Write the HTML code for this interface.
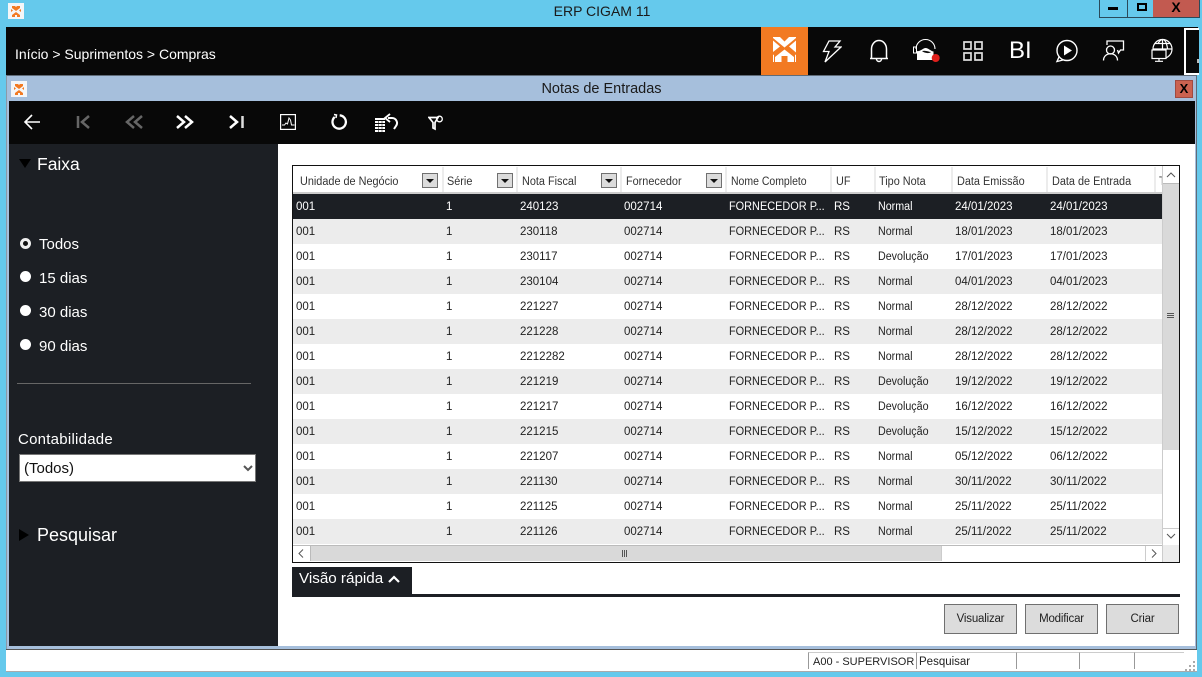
<!DOCTYPE html>
<html><head><meta charset="utf-8"><style>
*{box-sizing:border-box}
html,body{margin:0;padding:0;width:1202px;height:677px;overflow:hidden;background:#65c9ec;font-family:"Liberation Sans",sans-serif}
div,span,svg{position:absolute}
.t{white-space:nowrap;line-height:16px}
.h{top:174px;font-size:11.5px;color:#333;white-space:nowrap;line-height:16px;transform:scaleX(.945);transform-origin:left}
.dd{top:173px;width:16px;height:15px;background:#dcdcdc;border:1px solid #707070}
.dd:after{content:"";position:absolute;left:3px;top:5px;border:4px solid transparent;border-top:4px solid #111;border-bottom:0}
.sep{top:167px;width:2px;height:26px;background:#ececec}
.r{left:293px;width:869px;height:25px;font-size:11.5px;color:#222}
.r span{top:5px;white-space:nowrap;line-height:16px}
.a{left:3px}.b{left:153px}.c{left:227px}.d{left:331px}.e{left:436px;transform:scaleX(.95);transform-origin:left}.f{left:541px}.g{left:585px;transform:scaleX(.93);transform-origin:left}.i{left:662px}.j{left:757px}
.s{color:#fff;background:#1c1f24}.o{background:#ececec}.w{background:#fff}
.btn{top:604px;width:73px;height:30px;background:#dcdcdc;border:1px solid #707070;font-size:11.5px;letter-spacing:-.2px;color:#222;text-align:center;line-height:29px}
.rad{left:20px;width:11px;height:11px;border-radius:50%;background:#fff}
.lbl{left:39px;color:#fff;font-size:15px;line-height:18px;white-space:nowrap}
.sb{top:652px;height:17px;border-top:1px solid #ccc;border-left:1px solid #999}
</style></head><body>

<!-- title bar -->
<svg style="left:8px;top:3px" width="16" height="16" viewBox="0 0 16 16"><rect width="16" height="16" fill="#f4f6f8"/><path d="M4 3h3l1 1 1-1h3v2L8 8 4 5zM3 6l2 1.500-2 1.500zM13 6v3l-2-1.500zM8 9l4 3v2h-3v-2H7v2H4v-2z" fill="#f27a22"/></svg>
<div class="t" style="left:1px;top:3px;width:1202px;text-align:center;font-size:14px;color:#1a1a1a">ERP CIGAM 11</div>
<div style="left:1099px;top:0;width:29px;height:18px;border:1px solid #2a4a5a;border-top:0"><div style="left:8px;top:7px;width:10px;height:3px;background:#000"></div></div>
<div style="left:1127px;top:0;width:27px;height:18px;border:1px solid #2a4a5a;border-top:0"><div style="left:9px;top:3px;width:10px;height:8px;border:2px solid #000;border-top-width:2px"></div></div>
<div style="left:1153px;top:0;width:47px;height:18px;background:#c25a50;border:1px solid #2a4a5a;border-top:0;border-left:0;font-size:14px;font-weight:bold;text-align:center;line-height:15px;color:#000">X</div>

<!-- top black bar -->
<div style="left:6px;top:27px;width:1192px;height:48px;background:#080808"></div>
<div class="t" style="left:15px;top:46px;color:#fff;font-size:14px">Início &gt; Suprimentos &gt; Compras</div>
<div style="left:761px;top:27px;width:47px;height:48px;background:#f27a22"></div>
<svg style="left:773px;top:37px" width="23" height="26" viewBox="0 0 23 26" fill="#fff"><path d="M0 0h7l4.500 4.500L16 0h7v1L11.500 10.500 0 1z"/><path d="M0 3.500l7 6L0 15zM23 3.500l-7 6 7 6z"/><path d="M11.500 12.500L21 20v5h-6.500v-6h-6v6H2v-5z"/><path d="M0 18l1 -.5V25H0zM23 18l-1 -.5V25h1z"/></svg>
<svg style="left:822px;top:39px" width="20" height="25" viewBox="0 0 20 25" fill="none" stroke="#fff" stroke-width="1.300"><path d="M7 2h11l-5 6h6L3 23l4-10.500H1.500z"/></svg>
<svg style="left:869px;top:39px" width="20" height="24" viewBox="0 0 20 24" fill="none" stroke="#fff" stroke-width="1.500"><path d="M2.500 19V10a7.500 8.500 0 0 1 15 0v9M1 19.500h18" /><path d="M7.500 20a2.500 2.500 0 0 0 5 0"/></svg>
<svg style="left:912px;top:38px" width="30" height="26" viewBox="0 0 30 26"><path d="M4 11a9.500 9.500 0 0 1 19 0" fill="none" stroke="#fff" stroke-width="1.100"/><path d="M5 13c3 1 6-3 8.500-3 3 0 5 3 8 3.500V22H5z" fill="#fff"/><path d="M10 13c2 2 7 3 9 1-2 0-5-2-9-1z" fill="#111"/><rect x="1.500" y="9" width="3" height="6" fill="none" stroke="#fff" stroke-width="1"/><circle cx="23.700" cy="20" r="4" fill="#e0201c"/></svg>
<svg style="left:963px;top:41px" width="20" height="20" viewBox="0 0 20 20" fill="none" stroke="#ddd" stroke-width="1.700"><path d="M1 1h7v7H1zM12 1h7v7h-7zM1 12h7v7H1zM12 12h7v7h-7z"/></svg>
<div class="t" style="left:1009px;top:39px;font-size:24px;line-height:24px;color:#fff">BI</div>
<svg style="left:1055px;top:39px" width="24" height="24" viewBox="0 0 24 24" fill="none" stroke="#fff" stroke-width="1.400"><circle cx="12" cy="11.500" r="10"/><path d="M4 18l-2 4.500 6-1.500"/><path d="M9 6.500l8 5-8 5z" fill="#fff" stroke="none"/></svg>
<svg style="left:1102px;top:39px" width="24" height="23" viewBox="0 0 24 23" fill="none" stroke="#fff" stroke-width="1.300"><path d="M5 6V2h16.500v9h-3l-2 3-1-3"/><circle cx="8.500" cy="11" r="4"/><path d="M1.500 21.500c0-9 14-9 14 0"/></svg>
<svg style="left:1150px;top:38px" width="24" height="25" viewBox="0 0 24 25" fill="none" stroke="#fff" stroke-width="1.200"><circle cx="12.500" cy="11" r="9.500"/><path d="M3.500 11h18M12.500 1.500v10M5 5.500h15M8 5.500c1-2 3-4 4.500-4 2 0 4 2 5 9"/><rect x="2" y="12" width="14" height="8.500" fill="#080808"/><path d="M9 20.500v2.500M5 23.300h8"/></svg>
<div style="left:1184px;top:28px;width:15px;height:47px;border:2px solid #fff;border-right:0;background:#080808"><div style="left:11px;top:29px;width:2px;height:4px;background:#bbb"></div></div>

<!-- inner window -->
<div style="left:6px;top:75px;width:1191px;height:575px;background:#a6bfdc;border-top:1px solid #5f6b78;border-left:1px solid #8a9aa8;border-right:1px solid #5f6b78"></div>
<svg style="left:11px;top:81px" width="16" height="16" viewBox="0 0 16 16"><rect width="16" height="16" fill="#f4f6f8"/><path d="M4 3h3l1 1 1-1h3v2L8 8 4 5zM3 6l2 1.500-2 1.500zM13 6v3l-2-1.500zM8 9l4 3v2h-3v-2H7v2H4v-2z" fill="#f27a22"/></svg>
<div class="t" style="left:6px;top:81px;width:1191px;text-align:center;font-size:14.500px;color:#1a1a1a">Notas de Entradas</div>
<div style="left:1175px;top:80px;width:18px;height:18px;background:#cb6250;border:1px solid #a04a40;font-size:13px;font-weight:bold;text-align:center;line-height:16px;color:#000">X</div>

<!-- toolbar -->
<div style="left:9px;top:101px;width:1186px;height:43px;background:#080808"></div>
<svg style="left:22px;top:112px" width="20" height="20" viewBox="0 0 20 20" fill="none" stroke="#fff" stroke-width="1.600"><path d="M18 10H3M10 3l-7 7 7 7"/></svg>
<svg style="left:75px;top:114px" width="18" height="16" viewBox="0 0 18 16" fill="none" stroke="#666" stroke-width="2.500"><path d="M3 2v12"/><path d="M14 2L7 8l7 6"/></svg>
<svg style="left:124px;top:114px" width="20" height="16" viewBox="0 0 20 16" fill="none" stroke="#666" stroke-width="2.500"><path d="M10 2L3 8l7 6M18 2l-7 6 7 6"/></svg>
<svg style="left:175px;top:114px" width="20" height="16" viewBox="0 0 20 16" fill="none" stroke="#fff" stroke-width="2.500"><path d="M2 2l7 6-7 6M10 2l7 6-7 6"/></svg>
<svg style="left:228px;top:114px" width="18" height="16" viewBox="0 0 18 16" fill="none" stroke="#fff" stroke-width="2.500"><path d="M2 2l7 6-7 6"/><path d="M14.500 2v12" stroke="#ddd"/></svg>
<svg style="left:280px;top:114px" width="16" height="16" viewBox="0 0 16 16" fill="none" stroke="#fff" stroke-width="1.200"><rect x=".6" y=".6" width="14.800" height="14.800"/><path d="M2 11h2.500l1.500-2 1.500 1L9 4l1.500 2 1 5h3" stroke-width="1"/></svg>
<svg style="left:331px;top:113px" width="17" height="17" viewBox="0 0 17 17" fill="none" stroke="#fff" stroke-width="2.300"><path d="M3.700 4a6.700 6.700 0 1 0 5-1.700"/><path d="M3 1.500l2.500.5-.5 3" stroke-width="1.500"/></svg>
<svg style="left:374px;top:113px" width="26" height="20" viewBox="0 0 26 20"><path d="M1 5h10v14H1z" fill="#fff"/><path d="M1 7.500h10M1 10.500h10M1 13.500h10M1 16.500h10" stroke="#080808" stroke-width=".9"/><path d="M4.500 7v12M8 7v12" stroke="#080808" stroke-width=".5"/><path d="M14 5h4a5 5 0 0 1 4 8l-2 3" fill="none" stroke="#fff" stroke-width="2"/><path d="M16 1l-5 4 5 4" fill="none" stroke="#fff" stroke-width="1.800"/></svg>
<svg style="left:428px;top:115px" width="16" height="16" viewBox="0 0 16 16" fill="none" stroke="#fff" stroke-width="1.700"><path d="M1 2.500h9l-3 5V14l-2-1V7.500z"/><circle cx="11.500" cy="4" r="2.800" stroke-width="1.300"/></svg>

<!-- sidebar -->
<div style="left:9px;top:144px;width:269px;height:502px;background:#1c1f24"></div>
<div style="left:19px;top:159px;border:6px solid transparent;border-top:9px solid #000;border-bottom:0"></div>
<div class="t" style="left:37px;top:153px;color:#fff;font-size:17.500px;line-height:22px">Faixa</div>
<div class="rad" style="top:238px;background:#111;border:3px solid #eee"></div>
<div class="lbl" style="top:236px">Todos</div>
<div class="rad" style="top:271px"></div><div class="lbl" style="top:270px">15 dias</div>
<div class="rad" style="top:305px"></div><div class="lbl" style="top:304px">30 dias</div>
<div class="rad" style="top:339px"></div><div class="lbl" style="top:338px">90 dias</div>
<div style="left:17px;top:383px;width:234px;height:1px;background:#666"></div>
<div class="lbl" style="left:18px;top:431px;letter-spacing:.25px">Contabilidade</div>
<div style="left:19px;top:454px;width:237px;height:28px;background:#fff;border:1px solid #777;font-size:15px;color:#111;line-height:28px;padding-left:4px">(Todos)</div>
<svg style="left:243px;top:465px" width="10" height="8" viewBox="0 0 10 8" fill="none" stroke="#555" stroke-width="2"><path d="M1 1l4 4 4-4"/></svg>
<div style="left:19px;top:529px;border:5px solid transparent;border-left:10px solid #000;border-right:0;border-top-width:6px;border-bottom-width:6px"></div>
<div class="t" style="left:37px;top:524px;color:#fff;font-size:18px;line-height:22px">Pesquisar</div>

<!-- content -->
<div style="left:278px;top:144px;width:917px;height:502px;background:#fff"></div>
<div style="left:292px;top:165px;width:888px;height:398px;border:1px solid #111;background:#fff"></div>

<!-- headers -->
<div class="sep" style="left:442px"></div><div class="sep" style="left:516px"></div><div class="sep" style="left:620px"></div><div class="sep" style="left:725px"></div><div class="sep" style="left:830px"></div><div class="sep" style="left:874px"></div><div class="sep" style="left:951px"></div><div class="sep" style="left:1046px"></div><div class="sep" style="left:1154px"></div>
<div style="left:293px;top:192px;width:869px;height:2px;background:#ccc"></div>
<div class="h" style="left:300px">Unidade de Negócio</div><div class="dd" style="left:422px"></div>
<div class="h" style="left:447px">Série</div><div class="dd" style="left:497px"></div>
<div class="h" style="left:522px">Nota Fiscal</div><div class="dd" style="left:601px"></div>
<div class="h" style="left:626px">Fornecedor</div><div class="dd" style="left:706px"></div>
<div class="h" style="left:731px;transform:scaleX(.91)">Nome Completo</div>
<div class="h" style="left:836px">UF</div>
<div class="h" style="left:879px">Tipo Nota</div>
<div class="h" style="left:957px">Data Emissão</div>
<div class="h" style="left:1052px">Data de Entrada</div>
<div class="h" style="left:1159px;width:3px;overflow:hidden">T</div>

<!-- rows -->
<div class="r s" style="top:194px"><span class="a">001</span><span class="b">1</span><span class="c">240123</span><span class="d">002714</span><span class="e">FORNECEDOR P...</span><span class="f">RS</span><span class="g">Normal</span><span class="i">24/01/2023</span><span class="j">24/01/2023</span></div>
<div class="r o" style="top:219px"><span class="a">001</span><span class="b">1</span><span class="c">230118</span><span class="d">002714</span><span class="e">FORNECEDOR P...</span><span class="f">RS</span><span class="g">Normal</span><span class="i">18/01/2023</span><span class="j">18/01/2023</span></div>
<div class="r w" style="top:244px"><span class="a">001</span><span class="b">1</span><span class="c">230117</span><span class="d">002714</span><span class="e">FORNECEDOR P...</span><span class="f">RS</span><span class="g">Devolução</span><span class="i">17/01/2023</span><span class="j">17/01/2023</span></div>
<div class="r o" style="top:269px"><span class="a">001</span><span class="b">1</span><span class="c">230104</span><span class="d">002714</span><span class="e">FORNECEDOR P...</span><span class="f">RS</span><span class="g">Normal</span><span class="i">04/01/2023</span><span class="j">04/01/2023</span></div>
<div class="r w" style="top:294px"><span class="a">001</span><span class="b">1</span><span class="c">221227</span><span class="d">002714</span><span class="e">FORNECEDOR P...</span><span class="f">RS</span><span class="g">Normal</span><span class="i">28/12/2022</span><span class="j">28/12/2022</span></div>
<div class="r o" style="top:319px"><span class="a">001</span><span class="b">1</span><span class="c">221228</span><span class="d">002714</span><span class="e">FORNECEDOR P...</span><span class="f">RS</span><span class="g">Normal</span><span class="i">28/12/2022</span><span class="j">28/12/2022</span></div>
<div class="r w" style="top:344px"><span class="a">001</span><span class="b">1</span><span class="c">2212282</span><span class="d">002714</span><span class="e">FORNECEDOR P...</span><span class="f">RS</span><span class="g">Normal</span><span class="i">28/12/2022</span><span class="j">28/12/2022</span></div>
<div class="r o" style="top:369px"><span class="a">001</span><span class="b">1</span><span class="c">221219</span><span class="d">002714</span><span class="e">FORNECEDOR P...</span><span class="f">RS</span><span class="g">Devolução</span><span class="i">19/12/2022</span><span class="j">19/12/2022</span></div>
<div class="r w" style="top:394px"><span class="a">001</span><span class="b">1</span><span class="c">221217</span><span class="d">002714</span><span class="e">FORNECEDOR P...</span><span class="f">RS</span><span class="g">Devolução</span><span class="i">16/12/2022</span><span class="j">16/12/2022</span></div>
<div class="r o" style="top:419px"><span class="a">001</span><span class="b">1</span><span class="c">221215</span><span class="d">002714</span><span class="e">FORNECEDOR P...</span><span class="f">RS</span><span class="g">Devolução</span><span class="i">15/12/2022</span><span class="j">15/12/2022</span></div>
<div class="r w" style="top:444px"><span class="a">001</span><span class="b">1</span><span class="c">221207</span><span class="d">002714</span><span class="e">FORNECEDOR P...</span><span class="f">RS</span><span class="g">Normal</span><span class="i">05/12/2022</span><span class="j">06/12/2022</span></div>
<div class="r o" style="top:469px"><span class="a">001</span><span class="b">1</span><span class="c">221130</span><span class="d">002714</span><span class="e">FORNECEDOR P...</span><span class="f">RS</span><span class="g">Normal</span><span class="i">30/11/2022</span><span class="j">30/11/2022</span></div>
<div class="r w" style="top:494px"><span class="a">001</span><span class="b">1</span><span class="c">221125</span><span class="d">002714</span><span class="e">FORNECEDOR P...</span><span class="f">RS</span><span class="g">Normal</span><span class="i">25/11/2022</span><span class="j">25/11/2022</span></div>
<div class="r o" style="top:519px"><span class="a">001</span><span class="b">1</span><span class="c">221126</span><span class="d">002714</span><span class="e">FORNECEDOR P...</span><span class="f">RS</span><span class="g">Normal</span><span class="i">25/11/2022</span><span class="j">25/11/2022</span></div>

<!-- vertical scrollbar -->
<div style="left:1162px;top:166px;width:17px;height:379px;background:#fff;border-left:1px solid #ccc"></div>
<div style="left:1163px;top:183px;width:16px;height:267px;background:#d9d9d9;border-top:1px solid #bbb"></div>
<svg style="left:1166px;top:172px" width="10" height="6" viewBox="0 0 10 6" fill="none" stroke="#555" stroke-width="1"><path d="M1 5l4-4 4 4"/></svg>
<svg style="left:1166px;top:533px" width="10" height="6" viewBox="0 0 10 6" fill="none" stroke="#555" stroke-width="1"><path d="M1 1l4 4 4-4"/></svg>
<div style="left:1163px;top:528px;width:16px;height:1px;background:#ccc"></div>
<div style="left:1167px;top:313px;width:7px;height:1px;background:#555;box-shadow:0 2px 0 #555,0 4px 0 #555"></div>

<!-- horizontal scrollbar -->
<div style="left:293px;top:545px;width:869px;height:17px;background:#fff;border-top:1px solid #bbb"></div>
<div style="left:310px;top:546px;width:632px;height:15px;background:#d9d9d9;border-left:1px solid #bbb;border-right:1px solid #ccc"></div>
<svg style="left:298px;top:549px" width="6" height="9" viewBox="0 0 6 9" fill="none" stroke="#555"><path d="M5 .5l-4 4 4 4"/></svg>
<svg style="left:1151px;top:549px" width="6" height="9" viewBox="0 0 6 9" fill="none" stroke="#555"><path d="M1 .5l4 4-4 4"/></svg>
<div style="left:1145px;top:546px;width:1px;height:15px;background:#ccc"></div>
<div style="left:1162px;top:545px;width:17px;height:17px;background:#ececec;border-left:1px solid #ccc"></div>
<div style="left:622px;top:550px;width:1px;height:7px;background:#555;box-shadow:2px 0 0 #555,4px 0 0 #555"></div>

<!-- quick view -->
<div style="left:292px;top:567px;width:120px;height:30px;background:#1c1f24"></div>
<div style="left:292px;top:594px;width:888px;height:3px;background:#1c1f24"></div>
<div class="t" style="left:299px;top:570px;color:#fff;font-size:15.200px;line-height:18px">Visão rápida</div>
<svg style="left:388px;top:575px" width="12" height="8" viewBox="0 0 12 8" fill="none" stroke="#fff" stroke-width="2.200"><path d="M1 7l5-5 5 5"/></svg>
<div class="btn" style="left:944px">Visualizar</div>
<div class="btn" style="left:1025px">Modificar</div>
<div class="btn" style="left:1106px">Criar</div>

<!-- status bar -->
<div style="left:6px;top:649px;width:1191px;height:23px;background:#fff;border-top:1px solid #555;border-bottom:1px solid #aaa"></div>
<div class="sb" style="left:808px;width:108px"></div>
<div class="sb" style="left:916px;width:100px"></div>
<div class="sb" style="left:1016px;width:63px"></div>
<div class="sb" style="left:1079px;width:55px"></div>
<div class="sb" style="left:1134px;width:50px"></div>
<div class="t" style="left:813px;top:654px;font-size:11px;color:#222">A00 - SUPERVISOR</div>
<div class="t" style="left:919px;top:654px;font-size:11.500px;color:#222">Pesquisar</div>
<svg style="left:1184px;top:660px" width="12" height="11" viewBox="0 0 12 11" fill="#aaa"><path d="M9 1h2v2H9zM5 5h2v2H5zM9 5h2v2H9zM1 9h2v2H1zM5 9h2v2H5zM9 9h2v2H9z"/></svg>
</body></html>
